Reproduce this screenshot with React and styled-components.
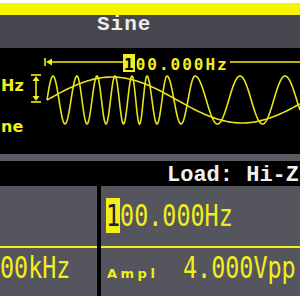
import styled, { createGlobalStyle } from 'styled-components'

const YELLOW = '#f2ee1a'
const WAVE = '#e8e41c'

const sweepPeaks = [53, 77, 97, 115, 132, 147, 167, 195, 240, 285, 332]

const buildSweep = () => {
  const knots = [[47, -0.25], ...sweepPeaks.map((x, i) => [x, i])]
  let d = ''
  for (let x = 47; x <= 300; x += 0.5) {
    let k = 0
    while (k < knots.length - 2 && x > knots[k + 1][0]) k++
    const [x0, p0] = knots[k]
    const [x1, p1] = knots[k + 1]
    const phase = p0 + ((x - x0) / (x1 - x0)) * (p1 - p0)
    const y = 52 - 24 * Math.cos(2 * Math.PI * phase)
    d += `${d ? 'L' : 'M'}${x.toFixed(1)} ${y.toFixed(2)} `
  }
  return d
}

const buildSine = () => {
  let d = ''
  for (let x = 47; x <= 300; x += 1) {
    const y = 52 - 23 * Math.sin((2 * Math.PI * (x - 47)) / 260)
    d += `${d ? 'L' : 'M'}${x} ${y.toFixed(2)} `
  }
  return d
}

const sweepPath = buildSweep()
const sinePath = buildSine()

export default function App() {
  return (
    <>
      <GlobalStyle />
      <Screen>
        <TopBand />
        <Title>Sine</Title>
        <WaveArea>
          <WaveSvg viewBox="0 0 300 106" width="300" height="106">
            <path d={sinePath} fill="none" stroke={WAVE} strokeWidth="1.6" />
            <path d={sweepPath} fill="none" stroke={WAVE} strokeWidth="1.6" />
            <line x1="45" y1="10" x2="45" y2="18" stroke={YELLOW} strokeWidth="1.6" />
            <polygon points="46,14 52,10.5 52,17.5" fill={YELLOW} />
            <line x1="52" y1="14" x2="123" y2="14" stroke={YELLOW} strokeWidth="1.4" />
            <line x1="230" y1="14" x2="300" y2="14" stroke={YELLOW} strokeWidth="1.4" />
            <rect x="123" y="6" width="12" height="18" fill={YELLOW} />
            <text
              x="124"
              y="21.5"
              fontFamily="'DejaVu Sans Mono', monospace"
              fontWeight="bold"
              fontSize="16"
              letterSpacing="2"
            >
              <tspan fill="#000">1</tspan>
              <tspan fill={YELLOW}>00.000Hz</tspan>
            </text>
            <line x1="31" y1="27" x2="41" y2="27" stroke={YELLOW} strokeWidth="1.6" />
            <polygon points="36,28 32.5,33 39.5,33" fill={YELLOW} />
            <line x1="36" y1="33" x2="36" y2="48" stroke={YELLOW} strokeWidth="1.6" />
            <polygon points="36,53 32.5,48 39.5,48" fill={YELLOW} />
            <line x1="31" y1="54" x2="41" y2="54" stroke={YELLOW} strokeWidth="1.6" />
          </WaveSvg>
          <SideLabels>
            <span>Hz</span>
            <span>ne</span>
          </SideLabels>
        </WaveArea>
        <Divider />
        <StatusBar>Load: Hi-Z</StatusBar>
        <ParamGrid>
          <Cell $h={62} $line $pad="24px 0 0 0">
            <Label $shift={-46}>Freq</Label>
          </Cell>
          <Cell $h={62} $line $pad="12px 0 0 5px">
            <Value $chars={9}>
              <Cursor>1</Cursor>00.000Hz
            </Value>
          </Cell>
          <Cell $h={48} $pad="2px 0 0 0">
            <Value $chars={5}>00kHz</Value>
          </Cell>
          <Cell $h={48} $pad="2px 5px 0 6px">
            <Label>Ampl</Label>
            <Value $chars={8} $push>
              4.000Vpp
            </Value>
          </Cell>
        </ParamGrid>
      </Screen>
    </>
  )
}

const GlobalStyle = createGlobalStyle`
  html, body {
    margin: 0;
    padding: 0;
    background: #fff;
  }
  body {
    width: 300px;
    height: 300px;
    overflow: hidden;
  }
`
const Screen = styled.div`
  width: 300px;
  padding-top: 3px;
  display: flex;
  flex-direction: column;
  overflow: hidden;
`
const TopBand = styled.div`
  height: 12px;
  background: #f7f400;
`
const Title = styled.div`
  height: 33px;
  box-sizing: border-box;
  padding-left: 97px;
  background: #46464f;
  color: #ececec;
  font-family: 'Liberation Mono', monospace;
  font-weight: 700;
  font-size: 21px;
  line-height: 20px;
  letter-spacing: 1px;
`
const WaveArea = styled.div`
  position: relative;
  height: 106px;
  background: #000;
  display: flex;
`
const WaveSvg = styled.svg`
  position: absolute;
  inset: 0;
`
const SideLabels = styled.div`
  position: relative;
  display: flex;
  flex-direction: column;
  gap: 25px;
  padding: 30px 0 0 1px;
  color: ${YELLOW};
  font-family: 'DejaVu Sans', sans-serif;
  font-weight: 700;
  font-size: 16px;
  line-height: 16px;
`
const Divider = styled.div`
  height: 7px;
  background: #5b5b63;
`
const StatusBar = styled.div`
  height: 25px;
  box-sizing: border-box;
  padding: 3px 0 0 167px;
  background: #000;
  color: #f0f0f0;
  font-family: 'Liberation Mono', monospace;
  font-weight: 700;
  font-size: 22px;
  line-height: 23px;
  white-space: nowrap;
  overflow: hidden;
`
const ParamGrid = styled.div`
  display: grid;
  grid-template-columns: 97px 1fr;
  column-gap: 4px;
  background: #000;
`
const Cell = styled.div`
  height: ${p => p.$h}px;
  box-sizing: border-box;
  padding: ${p => p.$pad};
  background: #55555d;
  border-bottom: ${p => (p.$line ? `2px solid ${YELLOW}` : 'none')};
  display: flex;
  align-items: baseline;
  overflow: hidden;
  white-space: nowrap;
`
const Label = styled.span`
  margin-left: ${p => p.$shift || 0}px;
  margin-bottom: 2px;
  color: ${YELLOW};
  font-family: 'DejaVu Sans', sans-serif;
  font-weight: 700;
  font-size: 13px;
  line-height: 13px;
  letter-spacing: 3.5px;
`
const Value = styled.span`
  display: inline-block;
  width: ${p => p.$chars * 14}px;
  margin-left: ${p => (p.$push ? 'auto' : '0')};
  color: ${YELLOW};
  font-family: 'DejaVu Sans Mono', monospace;
  font-size: 30px;
  line-height: 35px;
  white-space: nowrap;
  transform: scaleX(0.78);
  transform-origin: left center;
`
const Cursor = styled.span`
  background: ${YELLOW};
  color: #222;
`
